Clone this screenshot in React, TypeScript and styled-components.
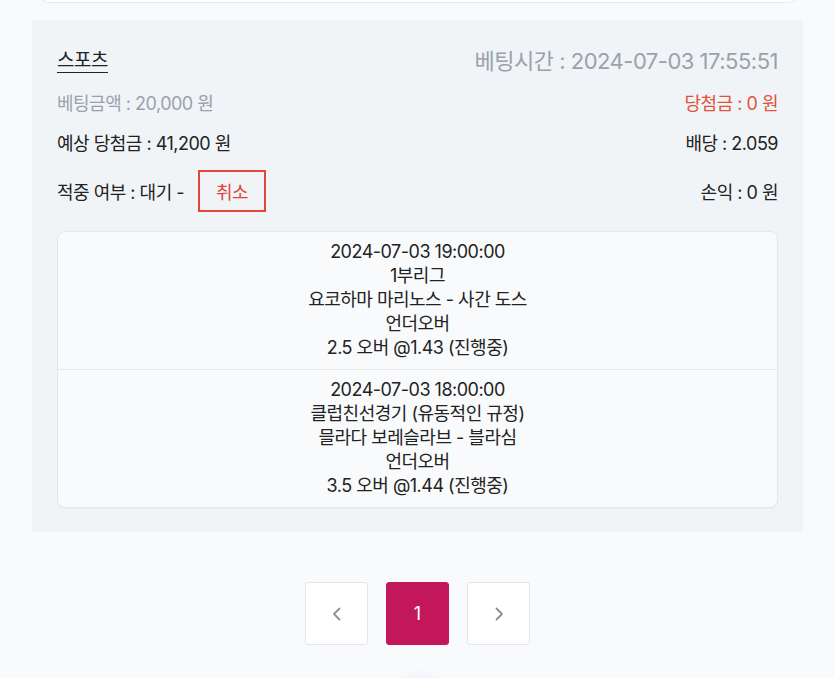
import type { FC, ReactElement } from "react";
import styled, { createGlobalStyle } from "styled-components";

interface Match {
    time: string;
    league: string;
    teams: string;
    market: string;
    pick: string;
}

const matches: Match[] = [
    {
        time: "2024-07-03 19:00:00",
        league: "1부리그",
        teams: "요코하마 마리노스 - 사간 도스",
        market: "언더오버",
        pick: "2.5 오버 @1.43 (진행중)",
    },
    {
        time: "2024-07-03 18:00:00",
        league: "클럽친선경기 (유동적인 규정)",
        teams: "믈라다 보레슬라브 - 블라심",
        market: "언더오버",
        pick: "3.5 오버 @1.44 (진행중)",
    },
];

const GlobalStyle = createGlobalStyle`
    html, body {
        margin: 0;
        padding: 0;
        background: #f8fafc;
    }
    body {
        font-family: Inter, "Noto Sans CJK KR", "Noto Sans", sans-serif;
        color: #222;
        overflow: hidden;
    }
`;

const Page = styled.div`
    width: 835px;
    height: 678px;
    position: relative;
    overflow: hidden;
    box-sizing: border-box;
`;

const PrevCard = styled.div`
    margin: -20px 35px 0 38px;
    height: 23px;
    background: #fff;
    border: 1px solid #e5e9ef;
    border-top: none;
    border-radius: 0 0 12px 12px;
    box-sizing: border-box;
`;

const Panel = styled.section`
    margin: 17px 32px 0 32px;
    background: #f0f4f7;
    padding: 22px 25px 24px 25px;
    box-sizing: border-box;
`;

const Row = styled.div<{ $h: number }>`
    display: flex;
    justify-content: space-between;
    align-items: center;
    height: ${({ $h }) => $h}px;
`;

const Text = styled.span<{ $tone?: "dark" | "gray" | "red"; $size?: number }>`
    font-size: ${({ $size }) => $size ?? 18}px;
    letter-spacing: -0.5px;
    color: ${({ $tone }) =>
        $tone === "gray" ? "#9aa1ab" : $tone === "red" ? "#e2533a" : "#222"};
`;

const Category = styled(Text)`
    text-decoration: underline;
    text-underline-offset: 5px;
    text-decoration-thickness: 1px;
`;

const Left = styled.div`
    display: flex;
    align-items: center;
    gap: 14px;
`;

const CancelButton = styled.button`
    width: 68px;
    height: 42px;
    background: transparent;
    border: 2px solid #e0463b;
    color: #e0463b;
    font-family: inherit;
    font-size: 18px;
    letter-spacing: -0.5px;
    padding: 0;
    cursor: pointer;
`;

const MatchBox = styled.div`
    margin-top: 5px;
    background: #f9fafb;
    border: 1px solid #e3e8ee;
    border-radius: 8px;
    overflow: hidden;
    box-shadow: 0 1px 1px rgba(0, 0, 0, 0.03);
`;

const MatchItem = styled.div`
    display: flex;
    flex-direction: column;
    align-items: center;
    padding: 8px 0 9px;
    font-size: 18px;
    line-height: 24px;
    letter-spacing: -0.5px;
    color: #222;

    & + & {
        border-top: 1px solid #e6eaef;
    }
`;

const Pager = styled.nav`
    display: flex;
    justify-content: center;
    gap: 18px;
    margin-top: 50px;
`;

const PageButton = styled.button<{ $active?: boolean }>`
    width: 63px;
    height: 63px;
    border-radius: 3px;
    border: 1px solid ${({ $active }) => ($active ? "#c2185b" : "#e3e7ec")};
    background: ${({ $active }) => ($active ? "#c2185b" : "#fff")};
    color: ${({ $active }) => ($active ? "#fff" : "#8a9099")};
    font-family: inherit;
    font-size: 18px;
    display: flex;
    align-items: center;
    justify-content: center;
    padding: 0;
    cursor: pointer;
`;

const Glow = styled.div`
    position: absolute;
    left: 385px;
    top: 668px;
    width: 70px;
    height: 70px;
    border-radius: 50%;
    background: radial-gradient(circle, rgba(120, 130, 240, 0.18), rgba(120, 130, 240, 0) 70%);
`;

const Chevron: FC<{ dir: "left" | "right" }> = ({ dir }): ReactElement => (
    <svg width="14" height="14" viewBox="0 0 14 14" fill="none">
        <path
            d={dir === "left" ? "M9.5 1.5 L4 7 L9.5 12.5" : "M4.5 1.5 L10 7 L4.5 12.5"}
            stroke="#8a9099"
            strokeWidth="1.8"
            strokeLinecap="round"
            strokeLinejoin="round"
        />
    </svg>
);

const App: FC = (): ReactElement => {
    return (
        <Page>
            <GlobalStyle />
            <PrevCard />
            <Panel>
                <Row $h={33}>
                    <Category $size={19}>스포츠</Category>
                    <Text $tone="gray" $size={22}>베팅시간 : 2024-07-03 17:55:51</Text>
                </Row>
                <Row $h={53}>
                    <Text $tone="gray">베팅금액 : 20,000 원</Text>
                    <Text $tone="red">당첨금 : 0 원</Text>
                </Row>
                <Row $h={28}>
                    <Text>예상 당첨금 : 41,200 원</Text>
                    <Text>배당 : 2.059</Text>
                </Row>
                <Row $h={70}>
                    <Left>
                        <Text>적중 여부 : 대기 -</Text>
                        <CancelButton>취소</CancelButton>
                    </Left>
                    <Text>손익 : 0 원</Text>
                </Row>
                <MatchBox>
                    {matches.map((m) => (
                        <MatchItem key={m.time}>
                            <span>{m.time}</span>
                            <span>{m.league}</span>
                            <span>{m.teams}</span>
                            <span>{m.market}</span>
                            <span>{m.pick}</span>
                        </MatchItem>
                    ))}
                </MatchBox>
            </Panel>
            <Pager>
                <PageButton><Chevron dir="left" /></PageButton>
                <PageButton $active>1</PageButton>
                <PageButton><Chevron dir="right" /></PageButton>
            </Pager>
            <Glow />
        </Page>
    );
};

export default App;
